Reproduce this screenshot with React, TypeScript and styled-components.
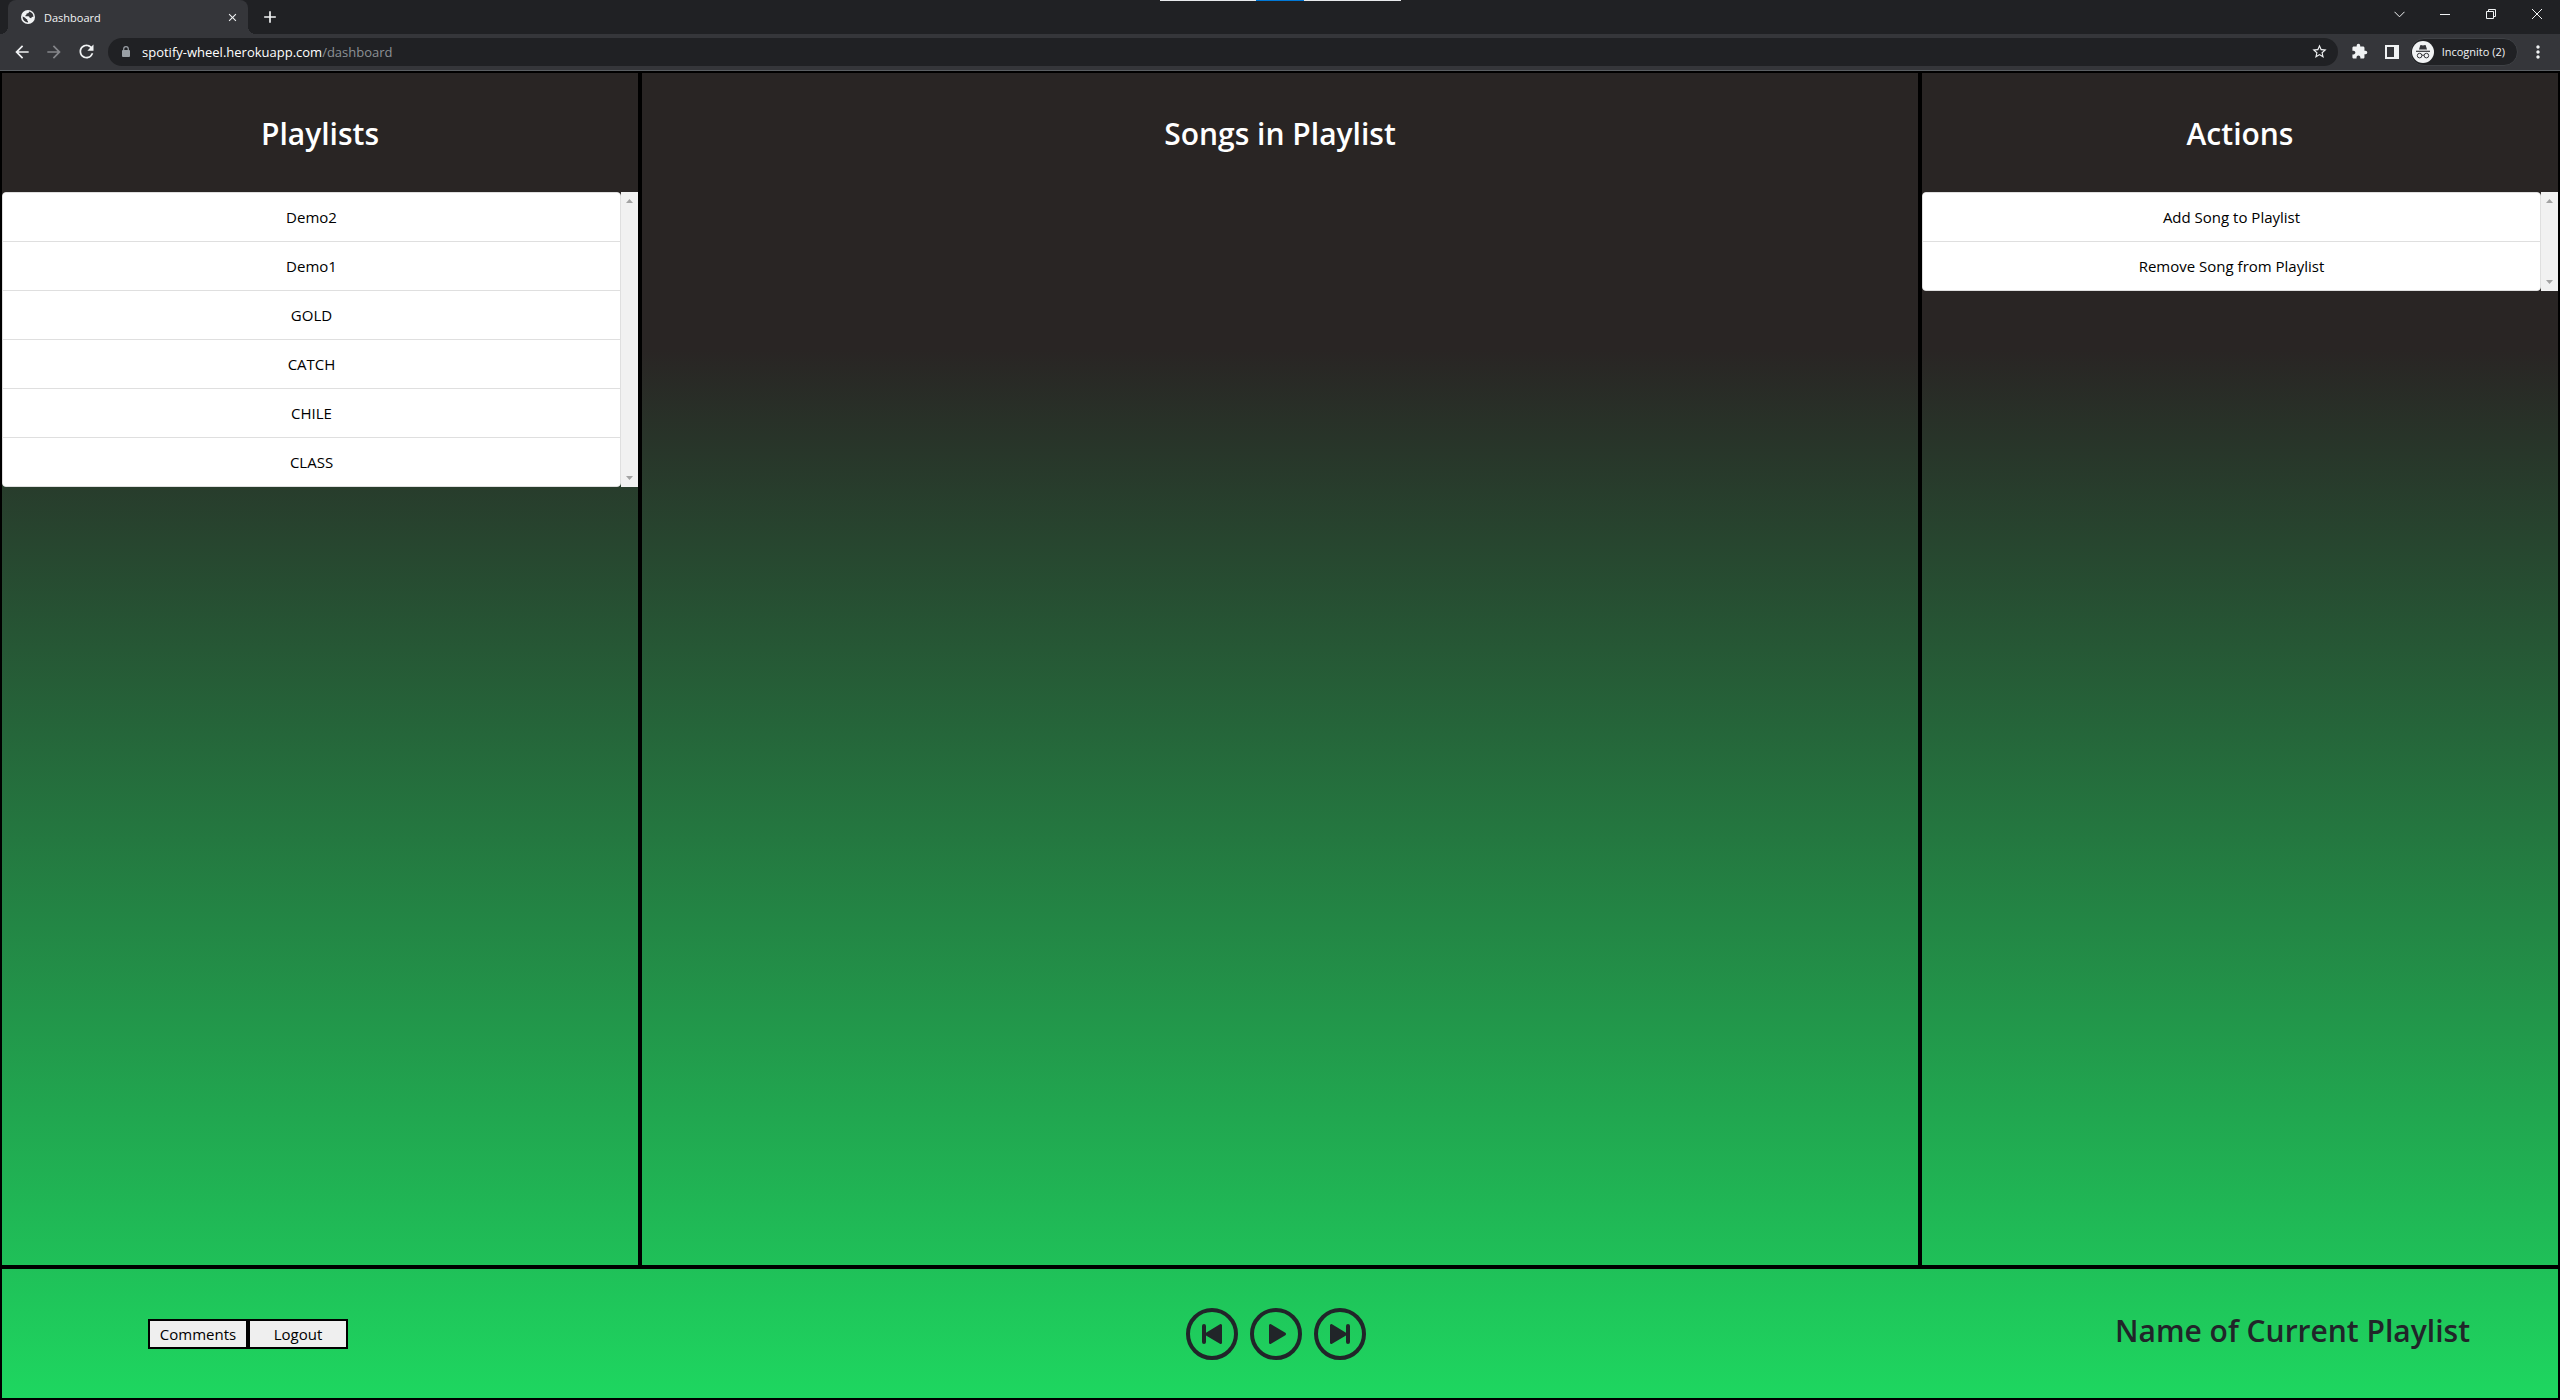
import React from "react";
import styled, { createGlobalStyle } from "styled-components";
import {
  IoPlayCircleOutline,
  IoPlaySkipBackCircleOutline,
  IoPlaySkipForwardCircleOutline,
} from "react-icons/io5";
import {
  MdArrowBack,
  MdArrowForward,
  MdClose,
  MdAdd,
  MdExtension,
  MdMoreVert,
  MdRefresh,
  MdStarBorder,
} from "react-icons/md";

const GlobalStyle = createGlobalStyle`
  *, *::before, *::after { box-sizing: border-box; }
  body { margin: 0; font-family: "Open Sans", "Noto Sans", sans-serif; }
  button { font: inherit; color: inherit; cursor: pointer; }
`;

const Window = styled.div`
  display: flex;
  flex-direction: column;
  min-height: 100vh;
`;

/* ---------- browser frame ---------- */

const IconButton = styled.button<{ $w?: number; $dim?: boolean }>`
  display: flex;
  align-items: center;
  justify-content: center;
  flex: none;
  width: ${(p) => p.$w ?? 28}px;
  height: 28px;
  padding: 0;
  border: 0;
  background: none;
  color: ${(p) => (p.$dim ? "#85868a" : "#f1f3f4")};
`;

const TabStrip = styled.div`
  position: relative;
  display: flex;
  height: 34px;
  padding-left: 8px;
  background: #202124;
`;

const Tab = styled.div`
  position: relative;
  display: flex;
  align-items: center;
  gap: 9px;
  width: 240px;
  padding: 0 6px 0 13px;
  border-radius: 8px 8px 0 0;
  background: #35363a;
  color: #f1f3f4;

  &::before, &::after {
    content: "";
    position: absolute;
    bottom: 0;
    width: 8px;
    height: 8px;
  }
  &::before {
    left: -8px;
    background: radial-gradient(circle at 0 0, #202124 8px, #35363a 8px);
  }
  &::after {
    right: -8px;
    background: radial-gradient(circle at 100% 0, #202124 8px, #35363a 8px);
  }
`;

const TabTitle = styled.span`
  flex: 1;
  font-size: 11px;
`;

const NewTab = styled(IconButton)`
  margin: 3px 0 0 8px;
`;

const DragHandle = styled.div`
  position: absolute;
  top: 0;
  left: 50%;
  width: 241px;
  height: 1px;
  transform: translateX(-120px);
  background: linear-gradient(90deg, #e8eaed 96px, #0078d7 96px 144px, #e8eaed 144px);
`;

const WindowControls = styled.div`
  display: flex;
  margin-left: auto;
`;

const Toolbar = styled.div`
  display: flex;
  align-items: center;
  height: 37px;
  padding: 0 8px 1px;
  background: #35363a;
  border-bottom: 1px solid #5b5f63;
`;

const NavButtons = styled.div`
  display: flex;
  gap: 4px;
  margin-right: 8px;
`;

const AddressBar = styled.div`
  display: flex;
  flex: 1;
  align-items: center;
  height: 28px;
  padding: 0 4px 0 14px;
  border-radius: 14px;
  background: #202124;
  color: #9aa0a6;
`;

const Address = styled.a`
  flex: 1;
  margin-left: 12px;
  color: #8d9195;
  font-size: 13px;
  text-decoration: none;
`;

const Host = styled.span`
  color: #ffffff;
`;

const ToolbarEnd = styled.div`
  display: flex;
  align-items: center;
  gap: 4px;
  margin-left: 8px;
`;

const Profile = styled.button`
  display: flex;
  align-items: center;
  gap: 8px;
  height: 28px;
  padding: 0 12px 0 1px;
  margin-right: 2px;
  border: 1px solid #3f4145;
  border-radius: 14px;
  background: #202124;
  color: #f1f3f4;
`;

const ProfileText = styled.span`
  font-size: 11px;
  white-space: nowrap;
`;

/* ---------- dashboard ---------- */

const Dashboard = styled.div`
  display: flex;
  flex: 1;
  flex-direction: column;
  background: linear-gradient(#292524 21%, #1ed760);
  color: #212529;
`;

const Columns = styled.main`
  display: grid;
  flex: 1;
  grid-template-columns: 1fr 2fr 1fr;
`;

const Column = styled.section`
  border: 2px solid #000000;
`;

const Heading = styled.h2`
  margin: 0;
  font-size: 30px;
  font-weight: 600;
  line-height: 40px;
`;

const ColumnHeading = styled(Heading)`
  padding: 41px 0 38px;
  color: #ffffff;
  text-align: center;
`;

const ScrollArea = styled.div`
  display: flex;
`;

const List = styled.ul`
  flex: 1;
  margin: 0;
  padding: 0;
  overflow: hidden;
  border: 1px solid #dfdfdf;
  border-radius: 4px;
  background: #ffffff;
  list-style: none;
`;

const Item = styled.li`
  & + & { border-top: 1px solid #dfdfdf; }
`;

const ItemButton = styled.button`
  display: block;
  width: 100%;
  height: 48px;
  padding: 0;
  border: 0;
  background: #ffffff;
  color: #000000;
  font-size: 15px;
`;

const ScrollTrack = styled.div`
  display: flex;
  flex-direction: column;
  align-items: center;
  justify-content: space-between;
  width: 17px;
  padding: 7px 0;
  background: #f1f1f1;
`;

const Arrow = styled.span<{ $down?: boolean }>`
  width: 7px;
  height: 4px;
  background: #a3a3a3;
  clip-path: ${(p) => (p.$down ? "polygon(0 0, 100% 0, 50% 100%)" : "polygon(50% 0, 100% 100%, 0 100%)")};
`;

const Footer = styled.footer`
  display: grid;
  min-height: 133px;
  grid-template-columns: 1fr auto 1fr;
  align-items: center;
  border: 2px solid #000000;
`;

const AccountActions = styled.div`
  display: flex;
  margin-left: 146px;
`;

const AccountButton = styled.button`
  width: 100px;
  height: 30px;
  padding: 0;
  border: 2px solid #000000;
  background: #efefef;
  color: #000000;
  font-size: 15px;
  line-height: 20px;
`;

const Transport = styled.div`
  display: flex;
  margin-right: 8px;
`;

const TransportButton = styled.button`
  display: flex;
  padding: 0;
  border: 0;
  background: none;
`;

const NowPlaying = styled(Heading)`
  padding-bottom: 6px;
  margin-right: 88px;
  text-align: right;
`;

function ScrollList({ items }: { items: string[] }) {
  return (
    <ScrollArea>
      <List>
        {items.map((item) => (
          <Item key={item}>
            <ItemButton type="button">{item}</ItemButton>
          </Item>
        ))}
      </List>
      <ScrollTrack aria-hidden="true">
        <Arrow />
        <Arrow $down />
      </ScrollTrack>
    </ScrollArea>
  );
}

function GlobeIcon() {
  return (
    <svg width="14" height="14" viewBox="0 0 14 14" aria-hidden="true">
      <circle cx="7" cy="7" r="7" fill="#f1f3f4" />
      <path
        d="M8 1.6Q8.3 3 7 3.2L5.600 3.600Q5.900 5 4.600 5.200L4.300 6.200H7.400Q8.600 6.400 8.600 7.700L10.200 8.200Q10.700 6.600 12.400 6.900A5.500 5.500 0 0 0 8 1.6ZM1.600 6.500Q3.600 7.200 4.600 8.300 5 9.200 6.200 9.300V10.600Q7.300 11 7.100 12.400A5.500 5.500 0 0 1 1.600 6.500Z"
        fill="#35363a"
      />
    </svg>
  );
}

function LockIcon() {
  return (
    <svg width="8" height="12" viewBox="0 0 8 12" aria-hidden="true">
      <path d="M1.7 5V3a2.3 2.3 0 0 1 4.6 0v2" fill="none" stroke="currentColor" strokeWidth="1.2" />
      <rect y="4" width="8" height="7" rx="1" fill="currentColor" />
    </svg>
  );
}

function IncognitoIcon() {
  return (
    <svg width="22" height="22" viewBox="0 0 22 22" fill="none" aria-hidden="true">
      <circle cx="11" cy="11" r="11" fill="#f1f3f4" />
      <path d="M7 8.4 8.2 4.4Q8.4 4 8.9 4.1L11 4.6 13.1 4.1Q13.6 4 13.8 4.4L15 8.4Z" fill="#35363a" />
      <path d="M4 10.3h14" stroke="#35363a" strokeWidth="1.2" />
      <circle cx="7.6" cy="14.6" r="2.3" stroke="#35363a" />
      <circle cx="14.4" cy="14.6" r="2.3" stroke="#35363a" />
      <path d="M9.9 14.4q1.1-.7 2.2 0" stroke="#35363a" />
    </svg>
  );
}

const playlists = ["Demo2", "Demo1", "GOLD", "CATCH", "CHILE", "CLASS"];
const actions = ["Add Song to Playlist", "Remove Song from Playlist"];

export default function App() {
  return (
    <Window>
      <GlobalStyle />
      <TabStrip>
        <Tab>
          <GlobeIcon />
          <TabTitle>Dashboard</TabTitle>
          <IconButton $w={20} aria-label="Close tab">
            <MdClose size={13} />
          </IconButton>
        </Tab>
        <NewTab aria-label="New tab">
          <MdAdd size={20} />
        </NewTab>
        <DragHandle />
        <WindowControls>
          <IconButton $w={46} aria-label="Search tabs">
            <svg width="11" height="7" viewBox="0 0 11 7" fill="none" stroke="currentColor">
              <path d="M.5 .8 5.5 5.8 10.5 .8" />
            </svg>
          </IconButton>
          <IconButton $w={46} aria-label="Minimize">
            <svg width="10" height="10" viewBox="0 0 10 10" stroke="currentColor">
              <path d="M0 5.5h10" />
            </svg>
          </IconButton>
          <IconButton $w={46} aria-label="Restore">
            <svg width="10" height="10" viewBox="0 0 10 10" fill="none" stroke="currentColor">
              <path d="M.5 2.5h7v7h-7zM2.5 2.5v-2h7v7h-2" />
            </svg>
          </IconButton>
          <IconButton $w={46} aria-label="Close">
            <svg width="10" height="10" viewBox="0 0 10 10" stroke="currentColor">
              <path d="M0 0 10 10M10 0 0 10" />
            </svg>
          </IconButton>
        </WindowControls>
      </TabStrip>
      <Toolbar>
        <NavButtons>
          <IconButton aria-label="Back"><MdArrowBack size={20} /></IconButton>
          <IconButton aria-label="Forward" $dim><MdArrowForward size={20} /></IconButton>
          <IconButton aria-label="Reload"><MdRefresh size={21} /></IconButton>
        </NavButtons>
        <AddressBar>
          <LockIcon />
          <Address href="#dashboard">
            <Host>spotify-wheel.herokuapp.com</Host>/dashboard
          </Address>
          <IconButton aria-label="Bookmark this page"><MdStarBorder size={17} /></IconButton>
        </AddressBar>
        <ToolbarEnd>
          <IconButton aria-label="Extensions"><MdExtension size={17} /></IconButton>
          <IconButton aria-label="Side panel">
            <svg width="14" height="14" viewBox="0 0 14 14" aria-hidden="true">
              <path d="M0 0h14v14H0zM2 2v10h7V2z" fill="currentColor" fillRule="evenodd" />
            </svg>
          </IconButton>
          <Profile>
            <IncognitoIcon />
            <ProfileText>Incognito (2)</ProfileText>
          </Profile>
          <IconButton aria-label="Menu"><MdMoreVert size={20} /></IconButton>
        </ToolbarEnd>
      </Toolbar>
      <Dashboard>
        <Columns>
          <Column>
            <ColumnHeading>Playlists</ColumnHeading>
            <ScrollList items={playlists} />
          </Column>
          <Column>
            <ColumnHeading>Songs in Playlist</ColumnHeading>
          </Column>
          <Column>
            <ColumnHeading>Actions</ColumnHeading>
            <ScrollList items={actions} />
          </Column>
        </Columns>
        <Footer>
          <AccountActions>
            <AccountButton type="button">Comments</AccountButton>
            <AccountButton type="button">Logout</AccountButton>
          </AccountActions>
          <Transport>
            <TransportButton type="button" aria-label="Previous song"><IoPlaySkipBackCircleOutline size={64} /></TransportButton>
            <TransportButton type="button" aria-label="Play"><IoPlayCircleOutline size={64} /></TransportButton>
            <TransportButton type="button" aria-label="Next song"><IoPlaySkipForwardCircleOutline size={64} /></TransportButton>
          </Transport>
          <NowPlaying>Name of Current Playlist</NowPlaying>
        </Footer>
      </Dashboard>
    </Window>
  );
}
